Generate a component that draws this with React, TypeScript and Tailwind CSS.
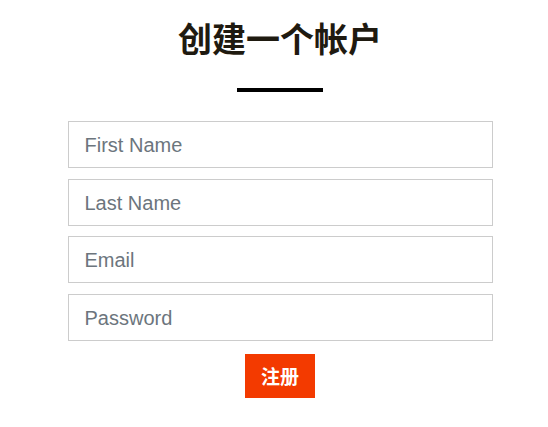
export default function App() {
  const fields = [
    { type: "text", placeholder: "First Name" },
    { type: "text", placeholder: "Last Name" },
    { type: "email", placeholder: "Email" },
    { type: "password", placeholder: "Password" },
  ];

  return (
    <main className="min-h-screen bg-white pl-[12px] font-['Liberation_Sans','Noto_Sans_CJK_SC',sans-serif]">
      <div className="mx-auto flex w-[425px] flex-col items-center pt-[14px]">
        <h1 className="text-[34px] font-bold leading-[48px] text-[#1f1a10] font-['Noto_Sans_CJK_SC',sans-serif]">
          创建一个帐户
        </h1>
        <div className="mt-[26px] h-[4px] w-[86px] bg-black" />
        <form className="mt-[29px] flex w-full flex-col items-center gap-[10.5px]">
          {fields.map((f) => (
            <input
              key={f.placeholder}
              type={f.type}
              placeholder={f.placeholder}
              className="h-[47px] w-full border border-[#cccccc] px-[16px] pt-[2px] text-[20px] text-gray-800 outline-none placeholder:text-[#6c757d]"
            />
          ))}
          <button
            type="button"
            className="mt-[3px] h-[44px] w-[70px] bg-[#f33a00] text-[19px] font-bold text-white font-['Noto_Sans_CJK_SC',sans-serif]"
          >
            注册
          </button>
        </form>
      </div>
    </main>
  );
}
